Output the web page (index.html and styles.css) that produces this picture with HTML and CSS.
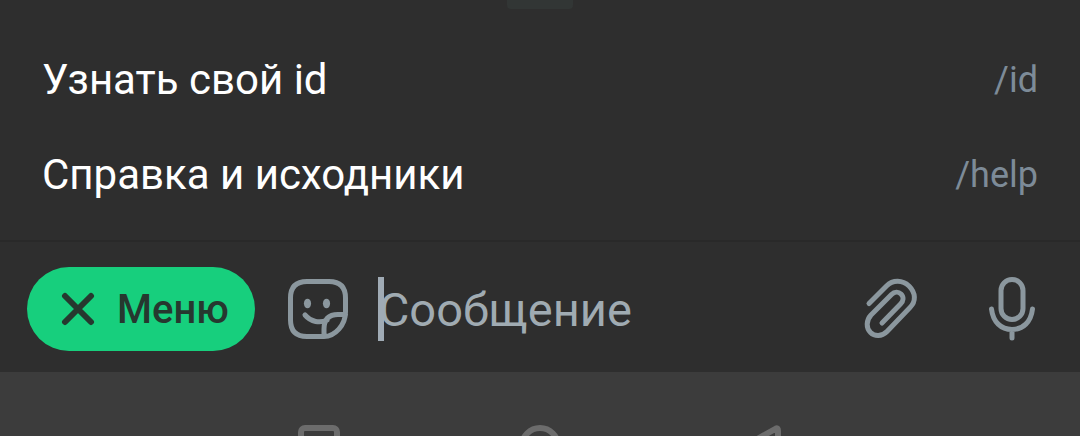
FILE: index.html
```html
<!DOCTYPE html>
<html lang="ru">
<head>
<meta charset="utf-8">
<meta name="viewport" content="width=device-width, initial-scale=1">
<title>Меню</title>
<link rel="stylesheet" href="styles.css">
</head>
<body>
<main class="sheet">
  <span class="handle"></span>
  <ul class="commands">
    <li><button class="command" type="button"><span>Узнать свой id</span><span class="slug">/id</span></button></li>
    <li><button class="command" type="button"><span>Справка и исходники</span><span class="slug">/help</span></button></li>
  </ul>
</main>
<form class="composer">
  <button class="menu" type="button">
    <svg width="34" height="34" viewBox="0 0 34 34" aria-hidden="true"><path d="M4 4 30 30M30 4 4 30"/></svg>
    <span>Меню</span>
  </button>
  <button class="tool" type="button" aria-label="Стикеры">
    <svg width="62" height="62" viewBox="0 0 62 62" aria-hidden="true">
      <path d="M58.500 34V20Q58.500 3.500 42 3.500H20Q3.500 3.500 3.500 20V42Q3.500 58.500 20 58.500H37C48 58.500 58.500 47 58.500 34ZM37 58.500V51C37 41 42 36.500 51 36.500H58.500M18 37C24 44 33 45.500 40 42"/>
      <ellipse class="eye" cx="20.500" cy="25.500" rx="3.600" ry="4.800"/>
      <ellipse class="eye" cx="39.500" cy="25.500" rx="3.600" ry="4.800"/>
    </svg>
  </button>
  <div class="field">
    <input class="message" type="text" placeholder="Сообщение" aria-label="Сообщение">
    <span class="caret"></span>
  </div>
  <button class="tool attach" type="button" aria-label="Прикрепить">
    <svg width="56" height="64" viewBox="0 0 56 64" aria-hidden="true"><path d="M6 26.500 23.500 9C30 2.500 39.500 3 46 9C53 16 53 24.500 47 30.500L24 54.500C18.500 60 11.500 59.500 7.500 55.500C3 51 3 43.500 8 38L28.500 17.500C31.500 14.500 35.500 14.500 38 17C41 20 40.500 24 37.500 27L19 46"/></svg>
  </button>
  <button class="tool" type="button" aria-label="Голосовое сообщение">
    <svg width="48" height="66" viewBox="0 0 48 66" aria-hidden="true"><rect x="13" y="3.500" width="22" height="40" rx="11"/><path d="M3.500 33C5 46 13 53.500 24 53.500S43 46 44.500 33M24 54V62"/></svg>
  </button>
</form>
<nav class="system">
  <button type="button" aria-label="Недавние"><svg width="42" height="42" viewBox="0 0 42 42" aria-hidden="true"><rect x="3" y="3" width="36" height="36" rx="4"/></svg></button>
  <button type="button" aria-label="Домой"><svg width="42" height="42" viewBox="0 0 42 42" aria-hidden="true"><circle cx="21" cy="21" r="18"/></svg></button>
  <button type="button" aria-label="Назад"><svg width="42" height="42" viewBox="0 0 42 42" aria-hidden="true"><path d="M36 3.500 5 21 36 38.500Q38 39 38 36V6Q38 2.500 36 3.500Z"/></svg></button>
</nav>
</body>
</html>
```
FILE: styles.css
```css
* {
  box-sizing: border-box;
}

body {
  display: flex;
  flex-direction: column;
  height: 100vh;
  margin: 0;
  overflow: hidden;
  background: #2e2e2e;
  color: #fff;
  font-family: Roboto, "Noto Sans", sans-serif;
}

button {
  border: 0;
  padding: 0;
  background: none;
  color: inherit;
  font: inherit;
  cursor: pointer;
}

svg {
  display: block;
  fill: none;
  stroke: currentColor;
  stroke-width: 5;
  stroke-linecap: round;
  stroke-linejoin: round;
}

.sheet {
  display: flex;
  flex-direction: column;
  padding-bottom: 18px;
  border-bottom: 2px solid #292929;
}

.handle {
  align-self: center;
  width: 66px;
  height: 9px;
  margin-bottom: 23px;
  border-radius: 0 0 4px 4px;
  background: #323635;
}

.commands {
  margin: 0;
  padding: 0;
  list-style: none;
}

.command {
  display: flex;
  align-items: center;
  justify-content: space-between;
  width: 100%;
  height: 95px;
  padding: 0 42px;
  font-size: 42px;
  line-height: 50px;
}

.slug {
  color: #7d8b98;
  font-size: 36px;
}

.composer {
  display: flex;
  align-items: center;
  padding: 25px 44px 21px 27px;
}

.menu {
  display: flex;
  align-items: center;
  gap: 22px;
  height: 84px;
  padding: 0 26px 0 34px;
  border-radius: 42px;
  background: #17cf7d;
  color: #26382f;
  font-size: 40px;
  font-weight: 500;
}

.menu svg {
  stroke-width: 6;
}

.tool {
  flex: none;
  margin-left: 32px;
  color: #8b979e;
}

.eye {
  fill: currentColor;
  stroke: none;
}

.field {
  position: relative;
  flex: 1;
  min-width: 0;
  margin-left: 29px;
}

.message {
  display: block;
  width: 100%;
  height: 64px;
  padding: 0 0 0 1px;
  border: 0;
  outline: 0;
  background: none;
  color: #fff;
  font: 47px Roboto, "Noto Sans", sans-serif;
}

.message::placeholder {
  color: #a0abb2;
  opacity: 1;
}

.caret {
  position: absolute;
  top: 0;
  left: 0;
  width: 6px;
  height: 64px;
  background: #a0abb5;
}

.attach {
  margin-right: 37px;
}

.system {
  display: flex;
  flex: 1;
  align-items: flex-start;
  justify-content: center;
  gap: 179px;
  min-height: 0;
  padding-top: 53px;
  overflow: hidden;
  background: #3c3c3c;
  color: #6c6c6c;
}

.system svg {
  stroke-width: 6;
}
```
